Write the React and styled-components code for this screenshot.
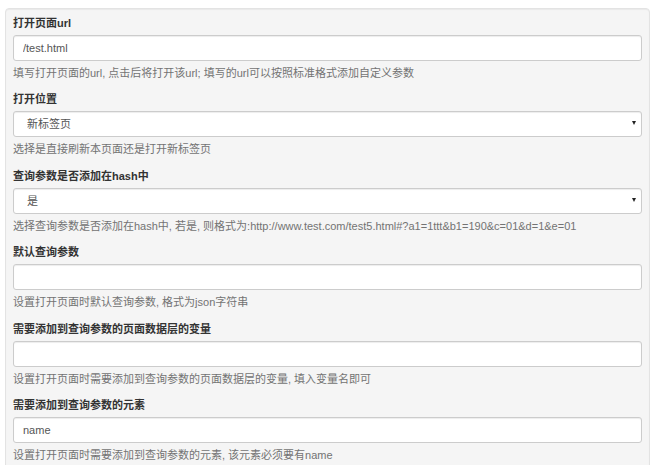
import React from "react";
import styled, { createGlobalStyle } from "styled-components";

const Global = createGlobalStyle`
  html, body { margin: 0; padding: 0; background: #fff; }
  body {
    font-family: "Liberation Sans", Arial, "Noto Sans CJK SC", sans-serif;
    color: #333;
  }
  * { box-sizing: border-box; }
`;

const Panel = styled.div`
  margin: 8px 9px 0 5px;
  background: #f5f5f5;
  border: 1px solid #e3e3e3;
  border-radius: 4px;
  padding: 6px 7px 20px;
  box-shadow: inset 0 1px 1px rgba(0, 0, 0, 0.05);
`;

const Group = styled.div`
  display: flex;
  flex-direction: column;
  margin-bottom: 10.4px;
`;

const Label = styled.label`
  font-size: 11px;
  line-height: 16px;
  font-weight: bold;
  color: #333;
  margin-bottom: 4px;
`;

const fieldBase = `
  width: 100%;
  height: 26px;
  border: 1px solid #ccc;
  border-radius: 3px;
  background: #fff;
  font-family: "Liberation Sans", Arial, "Noto Sans CJK SC", sans-serif;
  font-size: 11px;
  color: #555;
  box-shadow: inset 0 1px 1px rgba(0, 0, 0, 0.075);
  outline: none;
`;

const Input = styled.input`
  ${fieldBase}
  padding: 0 9px;
`;

const SelectWrap = styled.div`
  position: relative;
`;

const Select = styled.select`
  ${fieldBase}
  appearance: none;
  -webkit-appearance: none;
  padding: 0 13px;
`;

const Arrow = styled.span`
  position: absolute;
  right: 6px;
  top: 10px;
  width: 0;
  height: 0;
  border-left: 2.5px solid transparent;
  border-right: 2.5px solid transparent;
  border-top: 4px solid #222;
  pointer-events: none;
`;

const Help = styled.div`
  margin-top: 4px;
  font-size: 11px;
  line-height: 16px;
  color: #737373;
  white-space: nowrap;
`;

const fields = [
  {
    label: "打开页面url",
    type: "input",
    value: "/test.html",
    help: "填写打开页面的url, 点击后将打开该url; 填写的url可以按照标准格式添加自定义参数",
  },
  {
    label: "打开位置",
    type: "select",
    value: "新标签页",
    options: ["新标签页", "当前页面"],
    help: "选择是直接刷新本页面还是打开新标签页",
  },
  {
    label: "查询参数是否添加在hash中",
    type: "select",
    value: "是",
    options: ["是", "否"],
    help: "选择查询参数是否添加在hash中, 若是, 则格式为:http://www.test.com/test5.html#?a1=1ttt&b1=190&c=01&d=1&e=01",
  },
  {
    label: "默认查询参数",
    type: "input",
    value: "",
    help: "设置打开页面时默认查询参数, 格式为json字符串",
  },
  {
    label: "需要添加到查询参数的页面数据层的变量",
    type: "input",
    value: "",
    help: "设置打开页面时需要添加到查询参数的页面数据层的变量, 填入变量名即可",
  },
  {
    label: "需要添加到查询参数的元素",
    type: "input",
    value: "name",
    help: "设置打开页面时需要添加到查询参数的元素, 该元素必须要有name",
  },
];

export default function App() {
  return (
    <>
      <Global />
      <Panel>
        {fields.map((f) => (
          <Group key={f.label}>
            <Label>{f.label}</Label>
            {f.type === "input" ? (
              <Input defaultValue={f.value} />
            ) : (
              <SelectWrap>
                <Select defaultValue={f.value}>
                  {f.options.map((o) => (
                    <option key={o}>{o}</option>
                  ))}
                </Select>
                <Arrow />
              </SelectWrap>
            )}
            <Help>{f.help}</Help>
          </Group>
        ))}
      </Panel>
    </>
  );
}
